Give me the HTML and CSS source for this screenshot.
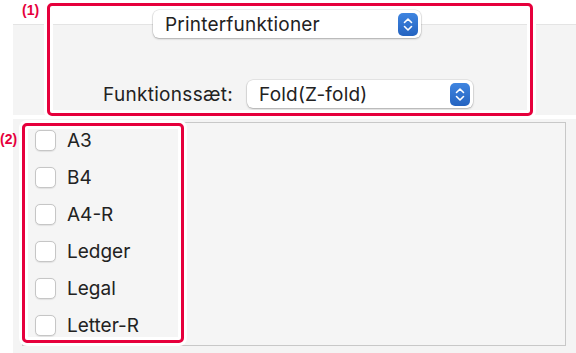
FILE: index.html
```html
<!DOCTYPE html>
<html lang="da">
<head>
    <meta charset="UTF-8">
    <title>Printerfunktioner</title>
    <link rel="stylesheet" href="styles.css">
</head>
<body>
    <div class="top-panel">
        <div class="popup popup-main">
            <span>Printerfunktioner</span>
            <span class="stepper">
                <svg width="20" height="23" viewBox="0 0 20 23"><path d="M6.5 9.5 L10 6 L13.5 9.5 M6.5 13.5 L10 17 L13.5 13.5" fill="none" stroke="#fff" stroke-width="1.6" stroke-linecap="round" stroke-linejoin="round"/></svg>
            </span>
        </div>
        <div class="set-row">
            <label>Funktionssæt:</label>
            <div class="popup popup-set">
                <span>Fold(Z-fold)</span>
                <span class="stepper">
                    <svg width="20" height="23" viewBox="0 0 20 23"><path d="M6.5 9.5 L10 6 L13.5 9.5 M6.5 13.5 L10 17 L13.5 13.5" fill="none" stroke="#fff" stroke-width="1.6" stroke-linecap="round" stroke-linejoin="round"/></svg>
                </span>
            </div>
        </div>
    </div>

    <div class="list-panel">
        <div class="list-box">
            <div class="checklist">
                <div class="check-row"><span class="box"></span>A3</div>
                <div class="check-row"><span class="box"></span>B4</div>
                <div class="check-row"><span class="box"></span>A4-R</div>
                <div class="check-row"><span class="box"></span>Ledger</div>
                <div class="check-row"><span class="box"></span>Legal</div>
                <div class="check-row"><span class="box"></span>Letter-R</div>
            </div>
        </div>
    </div>

    <!-- annotation marks -->
    <div class="mark mark-1"></div>
    <div class="mark-label label-1">(1)</div>
    <div class="mark mark-2"></div>
    <div class="mark-label label-2">(2)</div>
</body>
</html>
```

FILE: styles.css
```css
body {
    margin: 0;
    background: #fff;
    font-family: Inter, Roboto, "Liberation Sans", sans-serif;
    color: #222;
    width: 576px;
    height: 353px;
    position: relative;
    overflow: hidden;
}
.top-panel {
    margin-left: 13px;
    padding-top: 10px;
    height: 115px;
    box-sizing: border-box;
    background: linear-gradient(to bottom, #fff 24px, #e4e4e4 24px, #e4e4e4 25px, #f4f4f4 25px);
}
.popup {
    display: flex;
    align-items: center;
    justify-content: space-between;
    height: 28px;
    box-sizing: border-box;
    padding: 0 3px 0 12px;
    background: #fff;
    border-radius: 6px;
    box-shadow: 0 0 0 0.5px rgba(0, 0, 0, 0.12), 0 1px 2px rgba(0, 0, 0, 0.25);
    font-size: 19px;
    letter-spacing: 0.2px;
}
.popup-main {
    margin-left: 140px;
    width: 268px;
}
.popup-set {
    width: 226px;
}
.stepper {
    width: 20px;
    height: 23px;
    border-radius: 5px;
    background: linear-gradient(to bottom, #3f85e0, #2463c0);
    display: flex;
}
.set-row {
    display: flex;
    align-items: center;
    gap: 14px;
    margin-top: 42px;
    padding-left: 90px;
    font-size: 19px;
}
.set-row label {
    width: 130px;
    text-align: right;
    white-space: nowrap;
    letter-spacing: 0.3px;
}
.list-panel {
    margin-left: 13px;
    margin-top: 4px;
    padding: 3px 10px 7px 9px;
    background: #f4f4f4;
}
.list-box {
    height: 224px;
    box-sizing: border-box;
    border: 1px solid #c8c8c8;
    background: #f5f5f5;
}
.checklist {
    height: 214px;
    overflow: hidden;
    padding: 7px 0 0 12px;
    box-sizing: border-box;
    display: flex;
    flex-direction: column;
    gap: 16px;
}
.check-row {
    display: flex;
    align-items: center;
    gap: 11px;
    height: 21px;
    font-size: 19px;
}
.box {
    width: 21px;
    height: 21px;
    box-sizing: border-box;
    border: 1px solid #c6c6c6;
    border-radius: 5px;
    background: #fff;
    box-shadow: 0 0.5px 1px rgba(0, 0, 0, 0.08);
}
.mark {
    position: absolute;
    border: 3px solid #e6003c;
    border-radius: 5px;
    box-shadow: 0 0 0 3px #fff, inset 0 0 0 3px #fff;
}
.mark-1 {
    left: 47px;
    top: 3px;
    width: 480px;
    height: 107px;
}
.mark-2 {
    left: 22px;
    top: 123px;
    width: 156px;
    height: 214px;
}
.mark-label {
    position: absolute;
    color: #e6003c;
    font-family: "Liberation Sans", Arial, sans-serif;
    font-weight: bold;
    font-size: 14px;
}
.label-1 {
    left: 22px;
    top: 2px;
}
.label-2 {
    left: 0;
    top: 131px;
}
```
